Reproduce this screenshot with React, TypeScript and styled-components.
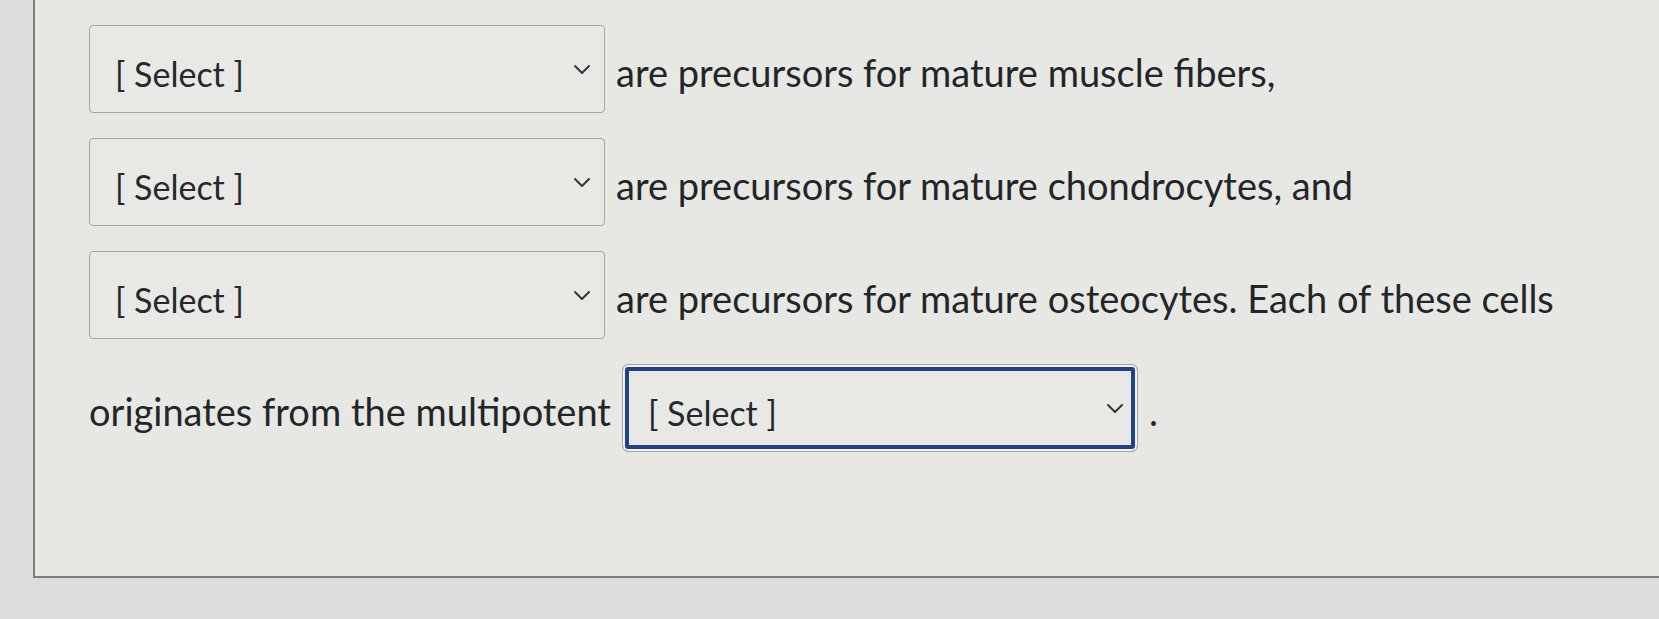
import styled, { createGlobalStyle } from "styled-components";

const GlobalStyle = createGlobalStyle`
  html, body {
    margin: 0;
    padding: 0;
  }
  body {
    background: #dcddda;
    font-family: Lato, "Open Sans", sans-serif;
    overflow: hidden;
  }
`;

interface DropdownProps {
  focused?: boolean;
}

const Chevron = () => (
  <svg width="18" height="11" viewBox="0 0 18 11" fill="none">
    <path
      d="M2 2 L9 9 L16 2"
      stroke="#34373a"
      strokeWidth="2"
      strokeLinecap="round"
      strokeLinejoin="round"
    />
  </svg>
);

const Dropdown = ({ focused }: DropdownProps) => (
  <StyledSelect focused={focused}>
    <StyledSelectText>[ Select ]</StyledSelectText>
    <StyledChevron>
      <Chevron />
    </StyledChevron>
  </StyledSelect>
);

const App = () => {
  return (
    <>
      <GlobalStyle />
      <StyledPage>
        <StyledPanel>
          <StyledRow>
            <Dropdown />
            <StyledText>are precursors for mature muscle fibers,</StyledText>
          </StyledRow>
          <StyledRow>
            <Dropdown />
            <StyledText>are precursors for mature chondrocytes, and</StyledText>
          </StyledRow>
          <StyledRow>
            <Dropdown />
            <StyledText>
              are precursors for mature osteocytes. Each of these cells
            </StyledText>
          </StyledRow>
          <StyledRow>
            <StyledText>originates from the multipotent</StyledText>
            <Dropdown focused />
            <StyledText>.</StyledText>
          </StyledRow>
        </StyledPanel>
      </StyledPage>
    </>
  );
};

const StyledPage = styled.div`
  width: 1659px;
  height: 619px;
  padding-left: 33px;
  box-sizing: border-box;
  background: #dcddda;
`;

const StyledPanel = styled.div`
  height: 578px;
  box-sizing: border-box;
  display: flex;
  flex-direction: column;
  gap: 25px;
  padding: 25px 0 0 54px;
  background: #e7e8e4;
  border-left: 2px solid #7b7d7a;
  border-bottom: 2px solid #7b7d7a;
`;

const StyledRow = styled.div`
  display: flex;
  align-items: baseline;
  gap: 11px;
`;

const StyledText = styled.span`
  font-size: 38px;
  color: #232629;
  white-space: nowrap;
`;

const StyledSelect = styled.div<{ focused?: boolean }>`
  display: flex;
  align-items: flex-start;
  justify-content: space-between;
  width: 516px;
  height: 88px;
  box-sizing: border-box;
  padding: 27px 13px 0 25px;
  border: 1px solid #a3a6a2;
  border-radius: ${({ focused }) => (focused ? "6px" : "4px")};
  background: #e8e9e5;
  box-shadow: ${({ focused }) =>
    focused ? "inset 0 0 0 2px #f3f4f1, inset 0 0 0 6px #243f8c" : "none"};
`;

const StyledSelectText = styled.span`
  font-size: 34px;
  color: #26292c;
  white-space: nowrap;
`;

const StyledChevron = styled.span`
  display: flex;
  margin-top: 11px;
`;

export default App;
